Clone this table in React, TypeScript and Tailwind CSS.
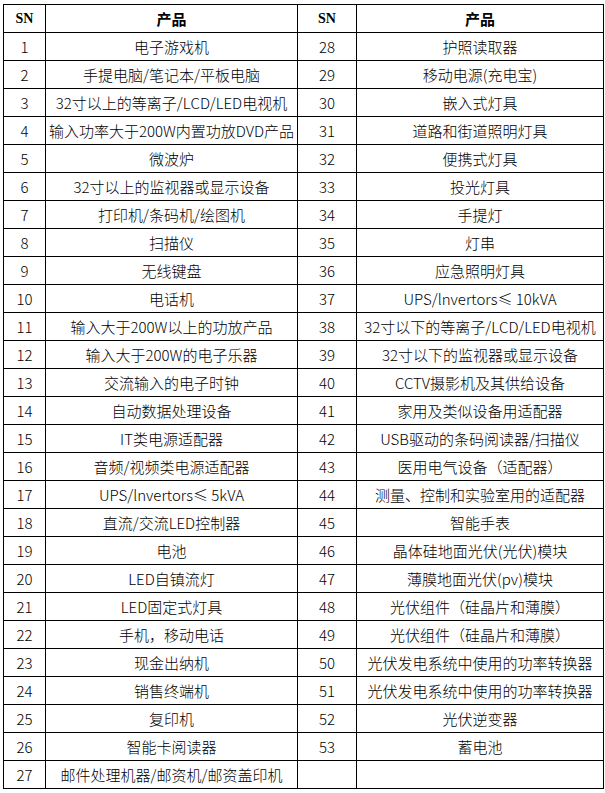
const LEFT: [number, string][] = [
  [1, '电子游戏机'],
  [2, '手提电脑/笔记本/平板电脑'],
  [3, '32寸以上的等离子/LCD/LED电视机'],
  [4, '输入功率大于200W内置功放DVD产品'],
  [5, '微波炉'],
  [6, '32寸以上的监视器或显示设备'],
  [7, '打印机/条码机/绘图机'],
  [8, '扫描仪'],
  [9, '无线键盘'],
  [10, '电话机'],
  [11, '输入大于200W以上的功放产品'],
  [12, '输入大于200W的电子乐器'],
  [13, '交流输入的电子时钟'],
  [14, '自动数据处理设备'],
  [15, 'IT类电源适配器'],
  [16, '音频/视频类电源适配器'],
  [17, 'UPS/lnvertors≤ 5kVA'],
  [18, '直流/交流LED控制器'],
  [19, '电池'],
  [20, 'LED自镇流灯'],
  [21, 'LED固定式灯具'],
  [22, '手机，移动电话'],
  [23, '现金出纳机'],
  [24, '销售终端机'],
  [25, '复印机'],
  [26, '智能卡阅读器'],
  [27, '邮件处理机器/邮资机/邮资盖印机'],
];

const RIGHT: [number, string][] = [
  [28, '护照读取器'],
  [29, '移动电源(充电宝)'],
  [30, '嵌入式灯具'],
  [31, '道路和街道照明灯具'],
  [32, '便携式灯具'],
  [33, '投光灯具'],
  [34, '手提灯'],
  [35, '灯串'],
  [36, '应急照明灯具'],
  [37, 'UPS/lnvertors≤ 10kVA'],
  [38, '32寸以下的等离子/LCD/LED电视机'],
  [39, '32寸以下的监视器或显示设备'],
  [40, 'CCTV摄影机及其供给设备'],
  [41, '家用及类似设备用适配器'],
  [42, 'USB驱动的条码阅读器/扫描仪'],
  [43, '医用电气设备（适配器）'],
  [44, '测量、控制和实验室用的适配器'],
  [45, '智能手表'],
  [46, '晶体硅地面光伏(光伏)模块'],
  [47, '薄膜地面光伏(pv)模块'],
  [48, '光伏组件（硅晶片和薄膜）'],
  [49, '光伏组件（硅晶片和薄膜）'],
  [50, '光伏发电系统中使用的功率转换器'],
  [51, '光伏发电系统中使用的功率转换器'],
  [52, '光伏逆变器'],
  [53, '蓄电池'],
];

const cell = 'border border-black text-center p-0 whitespace-nowrap';

export default function App() {
  return (
    <div className="min-h-screen bg-white pl-[3px] pt-[4px] text-[15px] font-light leading-none text-black [font-family:'Noto_Sans_CJK_SC',sans-serif]">
      <table className="w-[600px] table-fixed border-collapse">
        <colgroup>
          <col className="w-[42px]" />
          <col className="w-[252px]" />
          <col className="w-[59px]" />
          <col className="w-[247px]" />
        </colgroup>
        <thead>
          <tr className="h-[28px]">
            <th className={`${cell} font-bold text-[14px] [font-family:'Liberation_Serif',serif]`}>SN</th>
            <th className={`${cell} font-bold`}>产品</th>
            <th className={`${cell} font-bold text-[14px] [font-family:'Liberation_Serif',serif]`}>SN</th>
            <th className={`${cell} font-bold`}>产品</th>
          </tr>
        </thead>
        <tbody>
          {LEFT.map(([n, name], i) => {
            const r = RIGHT[i];
            return (
              <tr key={n} className="h-[28px]">
                <td className={cell}>{n}</td>
                <td className={cell}>{name}</td>
                <td className={cell}>{r ? r[0] : ''}</td>
                <td className={cell}>{r ? r[1] : ''}</td>
              </tr>
            );
          })}
        </tbody>
      </table>
    </div>
  );
}
